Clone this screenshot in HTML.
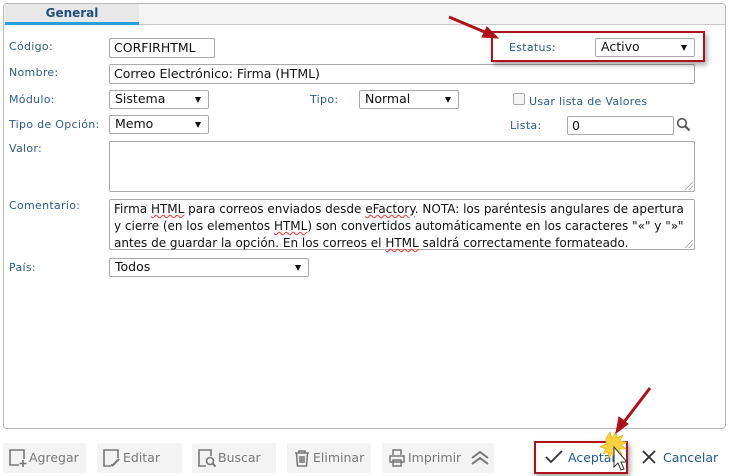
<!DOCTYPE html>
<html><head><meta charset="utf-8"><style>
*{box-sizing:border-box;margin:0;padding:0}
body{width:731px;height:476px;background:#fff;position:relative;overflow:hidden;font-family:"DejaVu Sans","Liberation Sans",sans-serif}
.abs{position:absolute}
.panel{left:3px;top:3px;width:723px;height:426px;border:1px solid #bbb;border-radius:4px;overflow:hidden}
.hdr{left:0;top:0;width:721px;height:21px;background:#f5f5f5;border-bottom:1px solid #c8c8c8}
.tab{left:1px;top:0;width:134px;height:21px;background:#e8e8e8;border-bottom:3px solid #2b9fd8;text-align:center;font-weight:bold;font-size:12px;color:#1f4f7f;line-height:19px}
.lbl{font-size:11px;color:#2d5c8f;letter-spacing:0.3px}
.in{border:1px solid #aaa;border-radius:2px;background:#fff;font-size:12.5px;color:#111;padding-left:4px;line-height:17px}
.sel{border:1px solid #aaa;border-radius:2px;background:#fff;font-size:12.5px;color:#111;padding-left:5px;line-height:16px}
.sel:after{content:"";position:absolute;right:7px;top:6px;border-left:3.5px solid transparent;border-right:3.5px solid transparent;border-top:6px solid #111}
.ta{border:1px solid #aaa;border-radius:2px;background:#fff;font-size:12px;color:#111;padding:1px 4px;line-height:17px}
.grip{position:absolute;right:1px;bottom:1px;width:8px;height:8px;background:linear-gradient(135deg,transparent 45%,#999 45%,#999 52%,transparent 52%,transparent 70%,#999 70%,#999 77%,transparent 77%)}
.u{text-decoration:underline wavy #e33;text-decoration-thickness:1px}
.btn{top:443px;height:30px;background:#f3f3f3;border-radius:2px;font-size:12.5px;color:#777;line-height:30px}
.btn svg{position:absolute;left:5px;top:5px}
.btn span{position:absolute;left:26px}
</style></head><body>
<div class="abs panel">
 <div class="abs hdr"></div>
 <div class="abs tab">General</div>
</div>

<div class="abs lbl" style="left:9px;top:40px">Código:</div>
<div class="abs in" style="left:109px;top:38px;width:106px;height:20px">CORFIRHTML</div>
<div class="abs lbl" style="left:9px;top:66px">Nombre:</div>
<div class="abs in" style="left:109px;top:64px;width:586px;height:20px">Correo Electrónico: Firma (HTML)</div>
<div class="abs lbl" style="left:9px;top:93px">Módulo:</div>
<div class="abs sel" style="left:109px;top:90px;width:100px;height:19px">Sistema</div>
<div class="abs lbl" style="left:310px;top:93px">Tipo:</div>
<div class="abs sel" style="left:359px;top:90px;width:100px;height:19px">Normal</div>
<div class="abs" style="left:513px;top:93px;width:12px;height:12px;border:1px solid #aaa;border-radius:2px;background:#f4f4f4"></div>
<div class="abs lbl" style="left:529px;top:95px">Usar lista de Valores</div>
<div class="abs lbl" style="left:9px;top:118px">Tipo de Opción:</div>
<div class="abs sel" style="left:109px;top:115px;width:100px;height:19px">Memo</div>
<div class="abs lbl" style="left:510px;top:119px">Lista:</div>
<div class="abs in" style="left:567px;top:116px;width:107px;height:19px">0</div>
<svg class="abs" style="left:676px;top:117px" width="15" height="15" viewBox="0 0 15 15"><circle cx="6" cy="6" r="4.3" fill="none" stroke="#555" stroke-width="1.6"/><path d="M9 9l4.5 4.5" stroke="#555" stroke-width="2.2"/></svg>
<div class="abs lbl" style="left:9px;top:142px">Valor:</div>
<div class="abs ta" style="left:109px;top:141px;width:586px;height:51px"><div class="grip"></div></div>
<div class="abs lbl" style="left:9px;top:199px">Comentario:</div>
<div class="abs ta" style="left:109px;top:199px;width:586px;height:51px">Firma <span class="u">HTML</span> para correos enviados desde <span class="u">eFactory</span>. NOTA: los paréntesis angulares de apertura<br>y cierre (en los elementos <span class="u">HTML</span>) son convertidos automáticamente en los caracteres "«" y "»"<br>antes de guardar la opción. En los correos el <span class="u">HTML</span> saldrá correctamente formateado.<div class="grip"></div></div>
<div class="abs lbl" style="left:9px;top:261px">País:</div>
<div class="abs sel" style="left:109px;top:258px;width:200px;height:19px">Todos</div>

<div class="abs lbl" style="left:509px;top:41px">Estatus:</div>
<div class="abs sel" style="left:595px;top:38px;width:100px;height:19px">Activo</div>
<div class="abs" style="left:491px;top:31px;width:214px;height:31px;border:2px solid #b0121b;box-shadow:2px 3px 5px rgba(0,0,0,.35)"></div>

<div class="abs btn" style="left:3px;width:83px"><svg width="20" height="20" viewBox="0 0 20 20" fill="none" stroke="#777" stroke-width="1.6"><path d="M11 17H2V2h14v9"/><path d="M15 12v7M11.5 15.5h7"/></svg><span>Agregar</span></div>
<div class="abs btn" style="left:97px;width:85px"><svg width="20" height="20" viewBox="0 0 20 20" fill="none" stroke="#777" stroke-width="1.6"><path d="M9 18H2V2h14v8"/><path d="M10 18l7-7M10 18l0-2" stroke-width="2"/></svg><span>Editar</span></div>
<div class="abs btn" style="left:192px;width:84px"><svg width="20" height="20" viewBox="0 0 20 20" fill="none" stroke="#777" stroke-width="1.6"><path d="M9 18H2V2h12v6"/><circle cx="13" cy="13" r="3.5"/><path d="M15.5 15.5l3 3" stroke-width="2"/></svg><span>Buscar</span></div>
<div class="abs btn" style="left:287px;width:84px"><svg width="20" height="20" viewBox="0 0 20 20" fill="none" stroke="#777" stroke-width="1.6"><path d="M3 5h14M7 5V3h6v2M4.5 5l1 13h9l1-13M8 8v7M10 8v7M12 8v7"/></svg><span>Eliminar</span></div>
<div class="abs btn" style="left:382px;width:112px"><svg width="20" height="20" viewBox="0 0 20 20" fill="none" stroke="#777" stroke-width="1.5"><path d="M6 7V2h8v5M3 8h14v6H3zM6 12h8v6H6z"/></svg><span>Imprimir</span><svg style="left:88px;top:7px" width="20" height="16" viewBox="0 0 20 16" fill="none" stroke="#777" stroke-width="2"><path d="M2 8l8-6 8 6M2 14l8-6 8 6"/></svg></div>

<svg class="abs" style="left:545px;top:449px" width="18" height="16" viewBox="0 0 18 16" fill="none" stroke="#333" stroke-width="1.8"><path d="M1 8l5 5L17 2"/></svg>
<div class="abs" style="left:568px;top:450px;font-size:12.5px;color:#1e5a96">Aceptar</div>
<div class="abs" style="left:534px;top:441px;width:94px;height:33px;border:2px solid #b0121b;box-shadow:2px 3px 5px rgba(0,0,0,.35)"></div>
<svg class="abs" style="left:641px;top:449px" width="16" height="16" viewBox="0 0 16 16" stroke="#333" stroke-width="1.8"><path d="M2 2l12 12M14 2L2 14"/></svg>
<div class="abs" style="left:663px;top:450px;font-size:12.5px;color:#1e5a96">Cancelar</div>

<svg class="abs" style="left:0;top:0" width="731" height="476" viewBox="0 0 731 476">
 <path d="M606 438l4-6 2 6 4-6 1 6 6-3-3 6 7 1-6 3 5 4-7 0 3 6-6-3-1 6-3-5-3 5-1-6-5 2 3-5-6-2 6-3z" fill="#f7d23a" stroke="#e0a800" stroke-width=".6"/>
 <path d="M614 447v20l4-4 3 7 3-1-3-7h6z" fill="#fff" stroke="#333" stroke-width="1"/>
 <g stroke="#b0121b" stroke-width="3" fill="#b0121b">
  <line x1="449" y1="17" x2="487" y2="33"/>
  <path d="M498 38l-16-1 5-10z" stroke-width="1"/>
  <line x1="650" y1="388" x2="624" y2="422"/>
  <path d="M616 433l3-16 9 7z" stroke-width="1"/>
 </g>
</svg>
</body></html>
